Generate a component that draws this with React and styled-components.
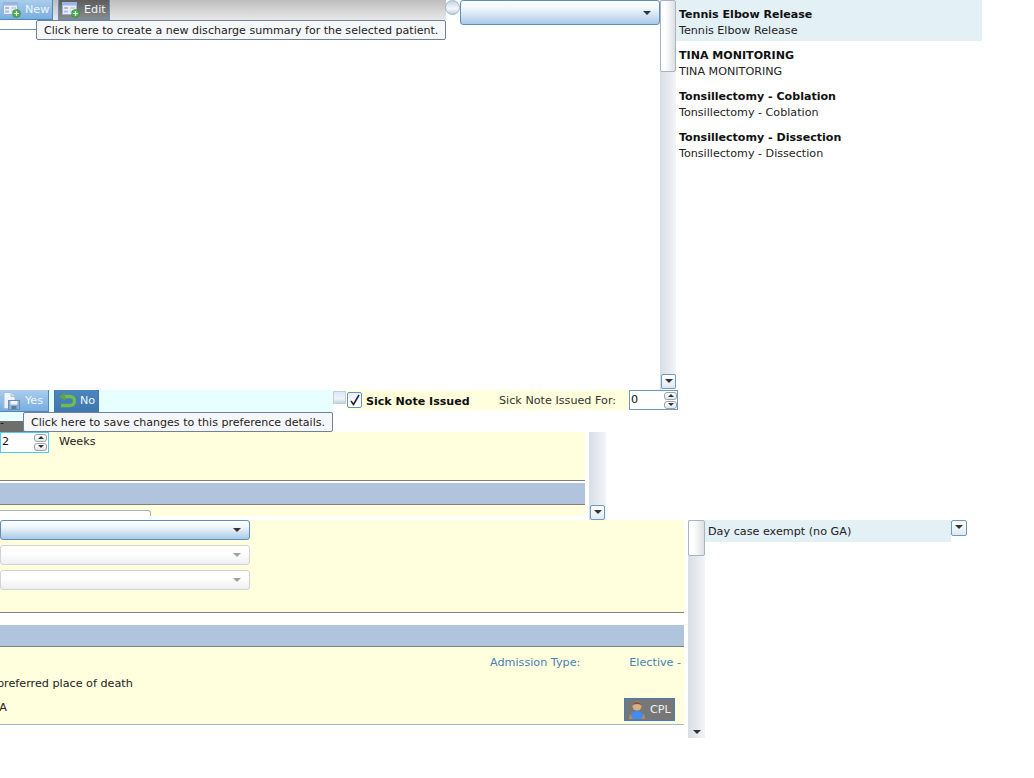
import React from 'react';
import styled, { createGlobalStyle } from 'styled-components';

const Global = createGlobalStyle`
  html, body { margin: 0; padding: 0; background: #fff; }
  body { font-family: "DejaVu Sans", Verdana, sans-serif; font-size: 11.2px; color: #222; }
`;
const Page = styled.div`position: relative; width: 1034px; height: 778px; overflow: hidden; background: #fff;`;

const TopSection = styled.section`display: flex; height: 390px;`;
const MainCol = styled.div`width: 660px; display: flex; flex-direction: column;`;
const Header = styled.div`display: flex; align-items: flex-start; height: 30px; position: relative;`;
const Toolbar = styled.div`width: 446px; height: 20px; display: flex; background: linear-gradient(#bdbdbd, #e9e9e9);`;
const RuleLine = styled.div`position: absolute; left: 0; top: 29px; width: 40px; height: 1px; background: #6f93b8;`;
const ToolButton = styled.div`
  height: ${p => p.$h || 20}px; box-sizing: border-box; display: flex; align-items: center; gap: 4px; color: #f0f4f8;
  width: ${p => p.$w}px; margin-left: ${p => p.$ml || 0}px; padding-left: ${p => p.$pl || 3}px;
  background: ${p => p.$bg}; border: 1px solid ${p => p.$bd}; border-top: 0; border-left-width: ${p => p.$noLeft ? 0 : 1}px;
  svg { flex: none; }
`;
const Round = styled.div`width: 15px; height: 15px; margin-left: -1px; border-radius: 50%; box-sizing: border-box; border: 1px solid #9db4cc; background: linear-gradient(#c4d4e4, #f4f8fc 60%, #bcd0e4); flex: none;`;
const Combo = styled.div`
  position: relative; box-sizing: border-box; width: ${p => p.$w}px; height: ${p => p.$h || 20}px; border-radius: 3px; flex: none;
  border: 1px solid ${p => p.$off ? '#d0d4d8' : '#5f8fb8'};
  background: ${p => p.$off ? 'linear-gradient(#fff, #fff 40%, #eeeff1)' : 'linear-gradient(#fff, #eef5fb 35%, #a8cae6)'};
  &::after { content: ''; position: absolute; right: 8px; top: 50%; margin-top: -2px; border: 4px solid transparent; border-bottom: 0; border-top: 4px solid ${p => p.$off ? '#a0a0a0' : '#333'}; }
`;
const Scroll = styled.div`
  position: relative; box-sizing: border-box; width: ${p => p.$w || 16}px; height: ${p => p.$h}px; margin-left: ${p => p.$ml || 0}px; flex: none;
  background: linear-gradient(90deg, #d8dee6, #f2f4f7);
`;
const Thumb = styled.div`box-sizing: border-box; height: ${p => p.$h}px; border: 1px solid #a6b4c4; border-radius: 2px; background: linear-gradient(90deg, #fff 30%, #dcdfe4);`;
const ArrowBtn = styled.div`
  position: absolute; bottom: ${p => p.$bottom}px; left: ${p => p.$left || 1}px; box-sizing: border-box; width: 15px; height: 15px; border: 1px solid #6f9ac0; border-radius: 2px; background: linear-gradient(#fff, #dfe9f2);
  &::after { content: ''; position: absolute; left: 3px; top: 4px; border: 4px solid transparent; border-bottom: 0; border-top: 4px solid #333; }
`;
const BareArrow = styled.div`position: absolute; left: 5px; bottom: 4px; border: 4px solid transparent; border-bottom: 0; border-top: 4px solid #333;`;

const List = styled.div`width: 306px;`;
const Item = styled.div`box-sizing: border-box; height: 41px; padding: 7px 3px 0; line-height: 16px; font-size: 11.15px; background: ${p => p.$sel ? '#e3f0f6' : 'transparent'};`;
const ItemTitle = styled.div`font-weight: 700; color: #111; font-size: 11.07px;`;

const MidSection = styled.section`display: flex; height: 42px; position: relative;`;
const CyanBar = styled.div`width: 333px; height: 31px; display: flex; background: #e8ffff; position: relative;`;
const DarkStrip = styled.div`position: absolute; left: 0; top: 31px; width: 30px; height: 11px; background: #6e6e6e; color: #111; line-height: 4px;`;
const MiniIcon = styled.div`width: 13px; height: 13px; box-sizing: border-box; margin-top: 1px; border: 1px solid #c4ccd4; background: linear-gradient(#dce8f4, #eef4fa 60%, #c4d4e4); flex: none;`;
const NoteBar = styled.div`margin-left: 1px; width: 331px; height: 20px; background: #ffffdd; display: flex; align-items: center; position: relative;`;
const Check = styled.div`box-sizing: border-box; width: 15px; height: 16px; border: 1px solid #5f9ab0; border-radius: 2px; background: linear-gradient(#eef, #fff); display: flex; align-items: center; justify-content: center;`;
const NoteLabel = styled.div`font-weight: 700; color: #111; margin: 2px 0 0 4px; width: 133px; font-size: 11.07px;`;
const NoteFor = styled.div`width: 130px; color: #333;`;
const NumInput = styled.div`box-sizing: border-box; width: ${p => p.$w}px; height: ${p => p.$h || 21}px; border: 1px solid ${p => p.$c}; background: #fff; padding: 1px 0 0 ${p => p.$pl}px; position: relative; color: #111; line-height: 15px;`;
const Spinner = styled.div`
  position: absolute; right: ${p => p.$right}px; top: 1px; width: 13px; display: flex; flex-direction: column; gap: 1px;
`;
const SpinBtn = styled.div`
  position: relative; box-sizing: border-box; height: 8px; width: 13px; border: 1px solid #9aa4ae; border-radius: 3px; background: linear-gradient(#fff, #e4e6ea);
  &::after { content: ''; position: absolute; left: 3px; top: 1px; border: 3px solid transparent; ${p => p.$up ? 'border-top: 0; border-bottom: 3px solid #333;' : 'border-bottom: 0; border-top: 3px solid #333;'} }
`;

const FormSection = styled.section`display: flex; height: 88px;`;
const FormPanel = styled.div`width: ${p => p.$w}px; position: relative; flex: none;`;
const Yellow = styled.div`background: #ffffdd; height: ${p => p.$h}px; position: relative;`;
const Rule = styled.div`height: 1px; background: ${p => p.$c || '#808080'};`;
const White = styled.div`height: ${p => p.$h}px; background: #fff;`;
const Band = styled.div`height: ${p => p.$h}px; background: #b0c4de;`;
const WeeksRow = styled.div`display: flex; align-items: flex-start; gap: 10px;`;
const WeeksLabel = styled.div`padding-top: 2px; line-height: 16px;`;
const Tab = styled.div`position: absolute; left: 0; bottom: 0; width: 151px; height: 6px; box-sizing: border-box; background: #fff; border: 1px solid #a6b4c4; border-left: 0; border-bottom: 0; border-radius: 0 3px 0 0;`;

const BottomSection = styled.section`display: flex; height: 218px;`;
const ComboStack = styled.div`display: flex; flex-direction: column; gap: 5px; width: 250px;`;
const TypeRow = styled.div`display: flex; padding: 8px 0 0 490px; color: #4a80b8; line-height: 16px; white-space: nowrap;`;
const TypeValue = styled.div`margin-left: 49px;`;
const Clipped = styled.div`margin-left: ${p => p.$ml}px; line-height: 16px; white-space: nowrap; margin-top: ${p => p.$mt}px;`;
const CplRow = styled.div`position: absolute; right: 9px; top: 51px;`;
const CplButton = styled.div`box-sizing: border-box; width: 51px; height: 23px; border: 1px solid #3f7fc0; background: #777; color: #f0f0f0; display: flex; align-items: center; gap: 3px; padding-left: 2px; svg { flex: none; }`;
const RightList = styled.div`flex: none; display: flex; align-items: flex-start; position: relative;`;
const SelItem = styled.div`box-sizing: border-box; width: 246px; height: 22px; padding: 4px 0 0 3px; line-height: 16px; background: #e3f0f6; color: #222;`;
const InlineArrow = styled(ArrowBtn)`position: relative; left: 0; bottom: auto; width: 16px; height: 16px;`;

const Tip = styled.div`
  position: absolute; left: ${p => p.$l}px; top: ${p => p.$t}px; box-sizing: border-box; width: ${p => p.$w}px; height: 20px; padding-left: 7px; line-height: 19px; font-size: 11.05px;
  background: #f6f7fa; border: 1px solid #6f8296; border-radius: 2px; color: #222; white-space: nowrap; z-index: 5;
`;

const FormIcon = () => (
  <svg width="18" height="17" viewBox="0 0 18 17">
    <rect x="0.5" y="1.5" width="14" height="12" fill="#e8eefa" stroke="#9db0d4" />
    <rect x="0.5" y="1.5" width="14" height="3" fill="#9cb4e0" />
    <rect x="2" y="6" width="4" height="2" fill="#aebcdc" /><rect x="8" y="6" width="5" height="2" fill="#c8d2e8" />
    <rect x="2" y="9.5" width="4" height="2" fill="#aebcdc" /><rect x="8" y="9.5" width="5" height="2" fill="#c8d2e8" />
    <circle cx="13.5" cy="12.5" r="4" fill="#4caf50" stroke="#2f7d32" strokeWidth=".5" />
    <path d="M13.5 10.3v4.4M11.3 12.5h4.4" stroke="#fff" strokeWidth="1.2" />
  </svg>
);
const SaveIcon = () => (
  <svg width="19" height="20" viewBox="0 0 19 20">
    <path d="M2 1.5h7l4 4v12H2z" fill="#eef4fc" stroke="#a8bcd8" />
    <path d="M9 1.5v4h4" fill="#d4e0f0" stroke="#a8bcd8" />
    <rect x="6.5" y="9.5" width="11" height="9" fill="#8fb0d4" stroke="#6c8cb4" />
    <rect x="8.5" y="10" width="7" height="3.5" fill="#f0f4f8" />
    <rect x="9.5" y="15" width="5" height="3" fill="#5a7ca4" />
  </svg>
);
const BackIcon = () => (
  <svg width="18" height="18" viewBox="0 0 18 18">
    <path d="M6 4.5h6a4.5 4.5 0 0 1 0 9H3" fill="none" stroke="#72bb4c" strokeWidth="3.4" />
    <path d="M1 4.5L7 .5v8z" fill="#5fa63e" />
  </svg>
);
const PersonIcon = () => (
  <svg width="20" height="20" viewBox="0 0 20 20">
    <circle cx="10" cy="6" r="4.6" fill="#dcae88" />
    <path d="M5.2 6.5a4.8 4.8 0 0 1 9.6 0c-.8-2-2.6-2.6-4.8-2.6s-4 .6-4.8 2.6z" fill="#7d5a3c" />
    <path d="M3 19c0-5 2.8-8 7-8s7 3 7 8z" fill="#3f8df0" />
    <path d="M2 19c0-2 .4-3.6 1.4-5l2 5zM18 19c0-2-.4-3.6-1.4-5l-2 5z" fill="#b8895e" />
  </svg>
);
const Tick = () => (
  <svg width="12" height="12" viewBox="0 0 12 12"><path d="M2 7l2.5 3.5L10 1" fill="none" stroke="#222" strokeWidth="1.5" /></svg>
);

const items = ['Tennis Elbow Release', 'TINA MONITORING', 'Tonsillectomy - Coblation', 'Tonsillectomy - Dissection'];

export default function App() {
  return (
    <Page>
      <Global />
      <TopSection>
        <MainCol>
          <Header>
            <Toolbar>
              <ToolButton $w={53} $bg="linear-gradient(#a9cdec, #78aee0)" $bd="#4f87b8" $noLeft><FormIcon />New</ToolButton>
              <ToolButton $w={52} $ml={5} $bg="linear-gradient(#5c5c5c, #8a8a8a)" $bd="#5f8fb8"><FormIcon />Edit</ToolButton>
            </Toolbar>
            <Round />
            <Combo $w={200} $h={25} />
            <RuleLine />
          </Header>
        </MainCol>
        <Scroll $h={389}>
          <Thumb $h={72} />
          <ArrowBtn $bottom={0} $left={0} />
        </Scroll>
        <List>
          {items.map((t, i) => (
            <Item key={t} $sel={i === 0}>
              <ItemTitle>{t}</ItemTitle>
              <div>{t}</div>
            </Item>
          ))}
        </List>
      </TopSection>

      <MidSection>
        <CyanBar>
          <ToolButton $w={49} $h={22} $pl={2} $bg="linear-gradient(#a9cdec, #78aee0)" $bd="#4f87b8" $noLeft><SaveIcon />Yes</ToolButton>
          <ToolButton $w={45} $h={22} $ml={5} $bg="linear-gradient(#4a86bc, #3f78ae)" $bd="#3f78ae"><BackIcon />No</ToolButton>
          <DarkStrip>-</DarkStrip>
        </CyanBar>
        <MiniIcon />
        <NoteBar>
          <Check><Tick /></Check>
          <NoteLabel>Sick Note Issued</NoteLabel>
          <NoteFor>Sick Note Issued For:</NoteFor>
          <NumInput $w={49} $h={20} $c="#6f9ac0" $pl={1}>
            0
            <Spinner $right={0}><SpinBtn $up /><SpinBtn /></Spinner>
          </NumInput>
        </NoteBar>
      </MidSection>

      <FormSection>
        <FormPanel $w={585}>
          <Yellow $h={48}>
            <WeeksRow>
              <NumInput $w={49} $c="#55c8f0" $pl={1}>
                2
                <Spinner $right={1}><SpinBtn $up /><SpinBtn /></Spinner>
              </NumInput>
              <WeeksLabel>Weeks</WeeksLabel>
            </WeeksRow>
          </Yellow>
          <Rule />
          <White $h={2} />
          <Band $h={21} />
          <Rule />
          <Yellow $h={11}><Tab /></Yellow>
          <White $h={4} />
        </FormPanel>
        <Scroll $h={88} $ml={4} $w={17}>
          <ArrowBtn $bottom={0} />
        </Scroll>
      </FormSection>

      <BottomSection>
        <FormPanel $w={684}>
          <Yellow $h={92}>
            <ComboStack>
              <Combo $w={250} />
              <Combo $w={250} $off />
              <Combo $w={250} $off />
            </ComboStack>
          </Yellow>
          <Rule />
          <White $h={12} />
          <Band $h={21} />
          <Rule />
          <Yellow $h={77}>
            <TypeRow>Admission Type:<TypeValue>Elective -</TypeValue></TypeRow>
            <Clipped $ml={-3} $mt={5}>preferred place of death</Clipped>
            <Clipped $ml={-9} $mt={8}>NA</Clipped>
            <CplRow><CplButton><PersonIcon />CPL</CplButton></CplRow>
          </Yellow>
          <Rule $c="#a4b8cc" />
        </FormPanel>
        <Scroll $h={218} $ml={4} $w={17}>
          <Thumb $h={36} />
          <BareArrow />
        </Scroll>
        <RightList>
          <SelItem>Day case exempt (no GA)</SelItem>
          <InlineArrow />
        </RightList>
      </BottomSection>

      <Tip $l={36} $t={20} $w={410}>Click here to create a new discharge summary for the selected patient.</Tip>
      <Tip $l={23} $t={412} $w={310}>Click here to save changes to this preference details.</Tip>
    </Page>
  );
}
